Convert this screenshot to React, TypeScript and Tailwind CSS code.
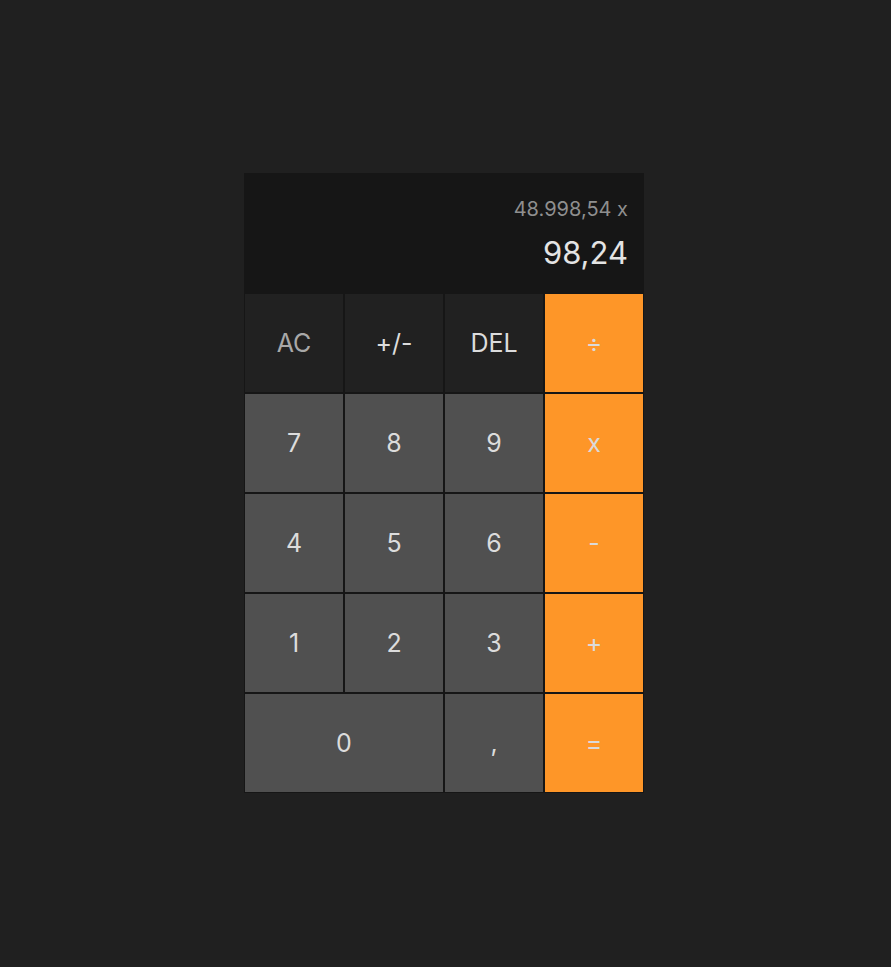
import React from "react";

type Btn = { label: string; kind: "fn" | "num" | "op"; wide?: boolean; color?: string };

const buttons: Btn[] = [
  { label: "AC", kind: "fn", color: "text-[#a8a8a8]" },
  { label: "+/-", kind: "fn" },
  { label: "DEL", kind: "fn" },
  { label: "÷", kind: "op" },
  { label: "7", kind: "num" },
  { label: "8", kind: "num" },
  { label: "9", kind: "num" },
  { label: "x", kind: "op" },
  { label: "4", kind: "num" },
  { label: "5", kind: "num" },
  { label: "6", kind: "num" },
  { label: "-", kind: "op" },
  { label: "1", kind: "num" },
  { label: "2", kind: "num" },
  { label: "3", kind: "num" },
  { label: "+", kind: "op" },
  { label: "0", kind: "num", wide: true },
  { label: ",", kind: "num" },
  { label: "=", kind: "op" },
];

export default function App() {
  return (
    <div
      className="w-full h-[967px] bg-[#202020] pt-[173px]"
      style={{ fontFamily: "Inter, 'Noto Sans', sans-serif" }}
    >
      <div className="ml-[244px] w-[400px] bg-[#161616]">
        <div className="h-[120px] bg-[#161616] flex flex-col items-end pr-4 pt-[24px]">
          <div className="text-[20px] leading-[24px] text-[#8f8f8f]">48.998,54 x</div>
          <div className="text-[31px] leading-[40px] mt-[12px] text-[#e4e4e4]">98,24</div>
        </div>
        <div className="grid grid-cols-4">
          {buttons.map((b, i) => {
            const bg =
              b.kind === "fn"
                ? "bg-[#212121]"
                : b.kind === "num"
                ? "bg-[#505050]"
                : "bg-[#fe9628]";
            const color = b.color ?? (b.kind === "op" ? "text-[#dadada]" : "text-[#dcdcdc]");
            return (
              <div
                key={i}
                className={`${b.wide ? "col-span-2" : ""} h-[100px] border border-[#161616] ${bg} ${color} flex items-center justify-center text-[25px] pt-[2px]`}
              >
                {b.label}
              </div>
            );
          })}
        </div>
      </div>
    </div>
  );
}
